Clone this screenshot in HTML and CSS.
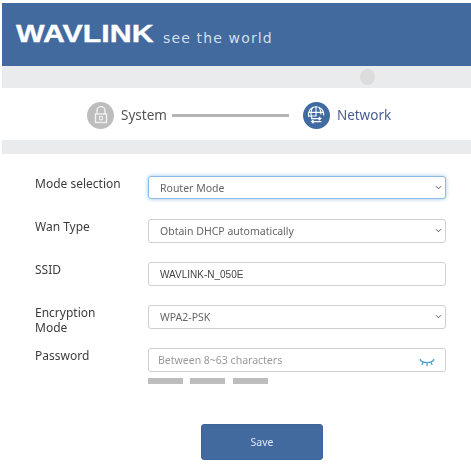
FILE: index.html
```html
<!DOCTYPE html>
<html lang="en">
<head>
<meta charset="utf-8">
<title>Wavlink setup</title>
<link rel="stylesheet" href="styles.css">
</head>
<body>
<div class="page">
  <header class="header">
    <span class="logo">WAVLINK</span>
    <span class="tagline">see the world</span>
  </header>
  <div class="band band-top"><span class="smudge"></span></div>
  <nav class="steps">
    <span class="step-icon step-icon-off">
      <svg viewBox="0 0 26 26" width="26" height="26" fill="none" stroke="#f1f1f1" stroke-width="1.4">
        <path d="M9 12V8.6a4 4 0 0 1 8 0V12"/>
        <rect x="7.5" y="12" width="11" height="8.5"/>
        <rect x="11.5" y="14.6" width="3" height="3.2" stroke-width="1"/>
      </svg>
    </span>
    <span class="step-label">System</span>
    <span class="step-line"></span>
    <span class="step-icon step-icon-on">
      <svg viewBox="0 0 26 26" width="26" height="26" fill="none" stroke="#fff" stroke-width="1.1">
        <path d="M6 15a7.6 7.6 0 1 1 14.6-1.5"/>
        <path d="M5.6 10.4h15M5.4 14h8M9.6 5.5c-2 3.6-2 7.6-.6 11M16.2 5.5c1.4 2.4 1.8 4.6 1.7 7M13 4.6v10"/>
        <path d="M8 16.6h9.6M15.8 14.9l2 1.7-2 1.7M18.4 19.6H9M10.6 17.9l-2 1.7 2 1.7" stroke-width="1.2"/>
      </svg>
    </span>
    <span class="step-label step-label-on">Network</span>
  </nav>
  <div class="band band-bottom"></div>
  <form class="form">
    <div class="row">
      <label class="label label-wide" for="mode">Mode selection</label>
      <div class="field">
        <select class="control control-select control-focus" id="mode"><option>Router Mode</option></select>
        <svg class="chevron" viewBox="0 0 8 6" width="7" height="5" fill="none" stroke="#555" stroke-width="1.2"><path d="M1 1.5 4 4.5 7 1.5"/></svg>
      </div>
    </div>
    <div class="row">
      <label class="label label-wide" for="wan">Wan Type</label>
      <div class="field">
        <select class="control control-select" id="wan"><option>Obtain DHCP automatically</option></select>
        <svg class="chevron" viewBox="0 0 8 6" width="7" height="5" fill="none" stroke="#555" stroke-width="1.2"><path d="M1 1.5 4 4.5 7 1.5"/></svg>
      </div>
    </div>
    <div class="row">
      <label class="label" for="ssid">SSID</label>
      <div class="field">
        <input class="control control-text" id="ssid" value="WAVLINK-N_050E">
      </div>
    </div>
    <div class="row">
      <label class="label" for="enc">Encryption Mode</label>
      <div class="field">
        <select class="control control-select" id="enc"><option>WPA2-PSK</option></select>
        <svg class="chevron" viewBox="0 0 8 6" width="7" height="5" fill="none" stroke="#555" stroke-width="1.2"><path d="M1 1.5 4 4.5 7 1.5"/></svg>
      </div>
    </div>
    <div class="row">
      <label class="label" for="pw">Password</label>
      <div class="field">
        <input class="control control-pw" id="pw" placeholder="Between 8~63 characters">
        <svg class="eye" viewBox="0 0 16 10" width="16" height="10" fill="none" stroke="#4a9fd0" stroke-width="1.3">
          <path d="M1 2.2c4 3.2 10 3.2 14 0M4 4.4 2.8 7M8 5v3M12 4.4 13.2 7M1 1l1 1.6M15 1l-1 1.6"/>
        </svg>
      </div>
    </div>
    <div class="strength">
      <span class="bar"></span><span class="bar"></span><span class="bar bar-last"></span>
    </div>
    <div class="actions">
      <button class="save" type="button">Save</button>
    </div>
  </form>
</div>
</body>
</html>
```
FILE: styles.css
```css
* { box-sizing: border-box; }
html, body { margin: 0; padding: 0; background: #fff; }
body { width: 471px; height: 468px; overflow: hidden; font-family: "Noto Sans", "Open Sans", sans-serif; }
.page { padding: 3px 0 0 2px; filter: blur(0.35px); }

.header { height: 63px; background: #426a9f; display: flex; align-items: flex-start; padding: 21px 0 0 14px; color: #fff; }
.logo { display: inline-block; font-family: "Liberation Sans", sans-serif; font-weight: 700; font-size: 23.5px; line-height: 20px; width: 147px; transform: scaleX(1.29); transform-origin: left; -webkit-text-stroke: 0.35px #fff; }
.tagline { font-family: "DejaVu Sans", sans-serif; font-size: 14px; line-height: 20px; letter-spacing: 1.15px; color: #d3deec; margin-top: 4px; }

.band { background: #eaebec; }
.band-top { height: 22px; display: flex; justify-content: flex-start; padding: 3px 0 0 358px; }
.smudge { width: 15px; height: 16px; border-radius: 50%; background: #dcdcdc; }
.band-bottom { height: 14px; }

.steps { height: 52px; display: flex; align-items: center; padding: 2px 0 0 85px; }
.step-icon { width: 27px; height: 27px; border-radius: 50%; display: flex; align-items: center; justify-content: center; flex: none; }
.step-icon-off { background: #bdbdbd; }
.step-icon-on { background: #3f6aa2; margin-left: 14px; }
.step-label { font-size: 13.5px; line-height: 18px; color: #555; margin: 0 0 0 7px; }
.step-label-on { color: #4a5f90; }
.step-line { width: 117px; height: 3px; background: #b4b4b4; margin-left: 5px; }

.form { padding: 22px 24px 0 33px; display: flex; flex-direction: column; }
.row { display: grid; grid-template-columns: 113px 298px; height: 43px; }
.label { font-size: 12px; line-height: 15px; color: #3c3c3c; width: 72px; }
.label-wide { width: 110px; }
.field { position: relative; width: 298px; }
.control { display: block; width: 298px; height: 24px; border: 1px solid #cfcfcf; border-radius: 3px; background: #fff; color: #666; font-family: "Noto Sans", sans-serif; font-size: 10.5px; padding: 0 0 0 7px; margin: 0; }
.control-select { appearance: none; -webkit-appearance: none; padding-left: 11px; }
.control-focus { height: 23px; border-color: #8dbbe8; box-shadow: 0 0 4px rgba(120, 175, 230, 0.7); outline: none; }
.control-text { color: #444; font-family: "Liberation Sans", sans-serif; font-size: 10px; padding-left: 11px; }
.control-pw { padding-left: 9px; }
.control-pw::placeholder { color: #999; opacity: 1; }
.chevron { position: absolute; right: 4px; top: 9px; }
.eye { position: absolute; right: 11px; top: 10px; }

.strength { display: flex; gap: 7px; padding-left: 113px; margin-top: -13px; }
.bar { width: 35px; height: 6px; background: #bdbdbd; }
.bar-last { margin-left: 1px; }

.actions { padding: 40px 0 0 166px; }
.save { width: 122px; height: 36px; border: 1px solid #3d659b; border-radius: 3px; background: #426a9f; color: #dfe6f0; font-family: "Noto Sans", sans-serif; font-size: 10.5px; padding: 0; }
```
